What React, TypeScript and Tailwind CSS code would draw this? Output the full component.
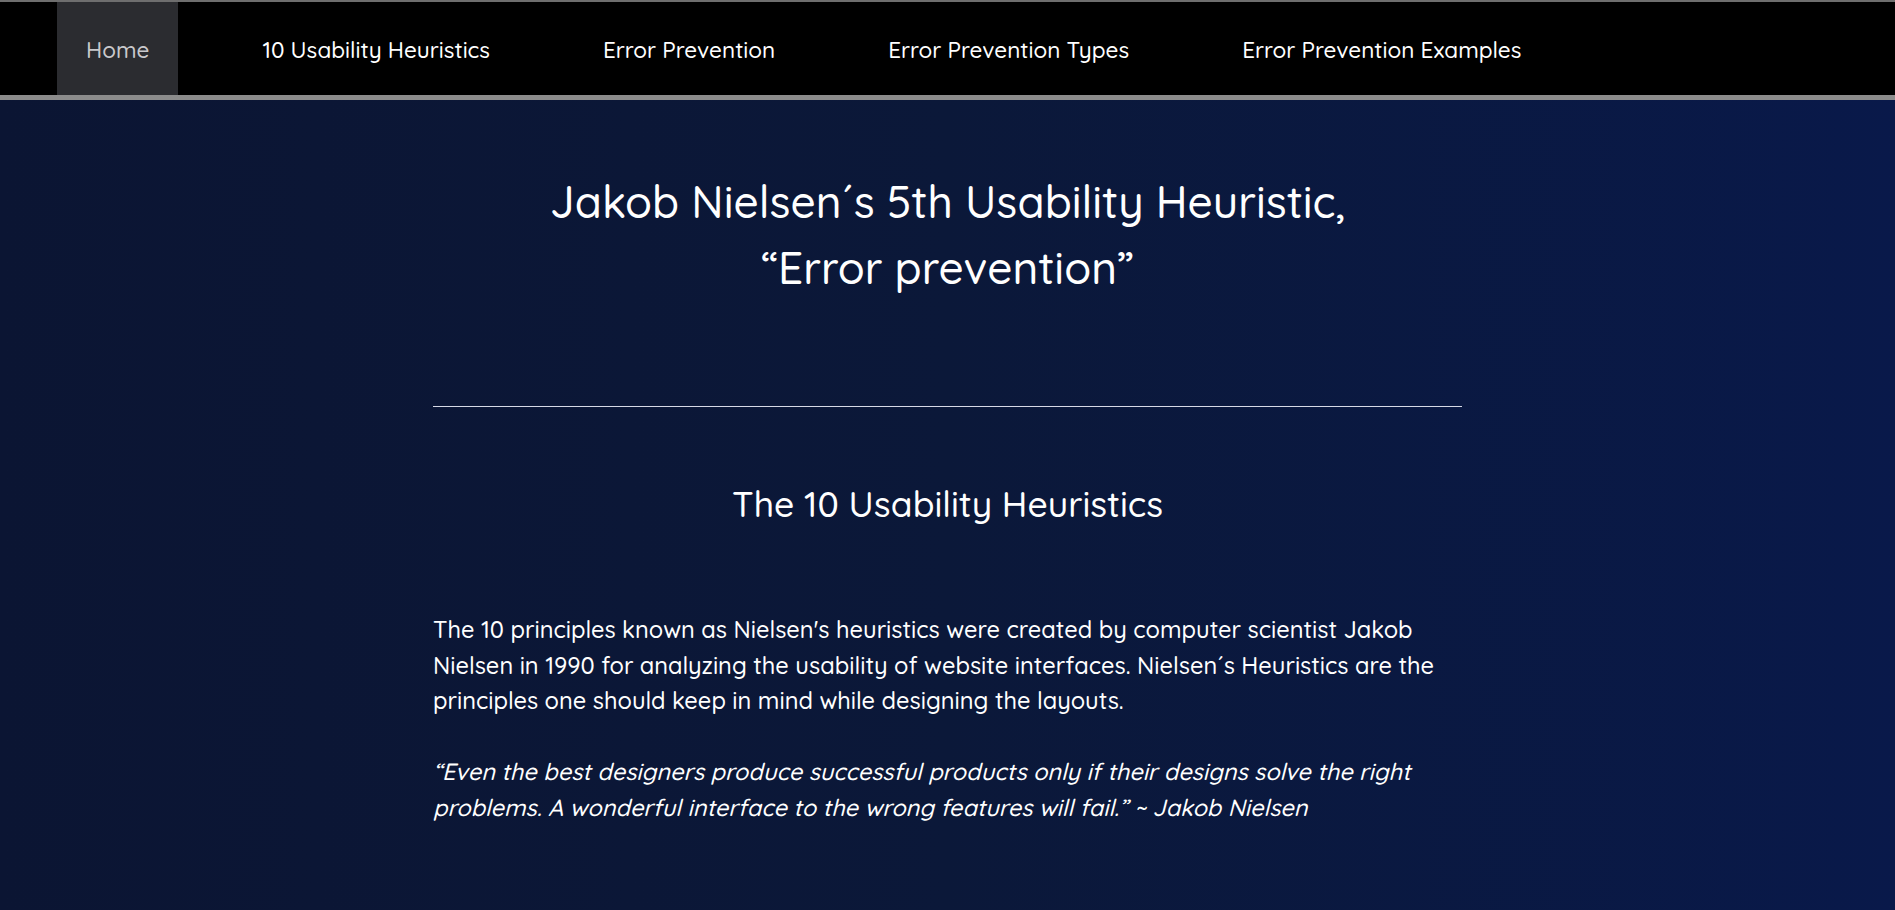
import React from "react";

const navItems = [
  "Home",
  "10 Usability Heuristics",
  "Error Prevention",
  "Error Prevention Types",
  "Error Prevention Examples",
];

const font = { fontFamily: "Quicksand, Lato, 'Noto Sans', sans-serif" };

const NavBar: React.FC = () => {
  return (
    <nav className="border-t-2 border-b-[5px] border-t-[#6e6e6e] border-b-[#8c8c8c] bg-black">
      <ul className="flex h-[93px] items-stretch gap-[55px] pl-[57px]">
        {navItems.map((item, i) => (
          <li
            key={item}
            className={
              i === 0
                ? "flex items-center bg-[#2b2c30] px-[29px] pt-[2px] text-[22.5px] font-medium text-[#c9c9cc]"
                : "flex items-center px-[29px] pt-[2px] text-[22.5px] font-medium text-white"
            }
          >
            {item}
          </li>
        ))}
      </ul>
    </nav>
  );
};

export default function App() {
  return (
    <div
      className="min-h-[910px] bg-gradient-to-r from-[#0b1533] via-[#0b1839] to-[#09194a] text-white"
      style={font}
    >
      <NavBar />
      <main className="mx-auto flex w-[1029px] flex-col pb-20">
        <h1 className="mt-[69px] text-center text-[44.2px] font-medium leading-[66px]">
          Jakob Nielsen´s 5th Usability Heuristic,
          <br />
          “Error prevention”
        </h1>
        <hr className="mt-[105px] border-t border-[#d6d9e6]" />
        <h2 className="mt-[71px] text-center text-[35.5px] font-medium leading-[52px]">
          The 10 Usability Heuristics
        </h2>
        <p className="mt-[82px] text-[23.6px] font-medium leading-[35.5px]">
          The 10 principles known as Nielsen's heuristics were created by
          computer scientist Jakob Nielsen in 1990 for analyzing the usability
          of website interfaces. Nielsen´s Heuristics are the principles one
          should keep in mind while designing the layouts.
        </p>
        <p className="mt-[35.5px] text-[23.5px] font-medium italic leading-[35.5px]">
          “Even the best designers produce successful products only if their
          designs solve the right problems. A wonderful interface to the wrong
          features will fail.” ~ Jakob Nielsen
        </p>
      </main>
    </div>
  );
}
